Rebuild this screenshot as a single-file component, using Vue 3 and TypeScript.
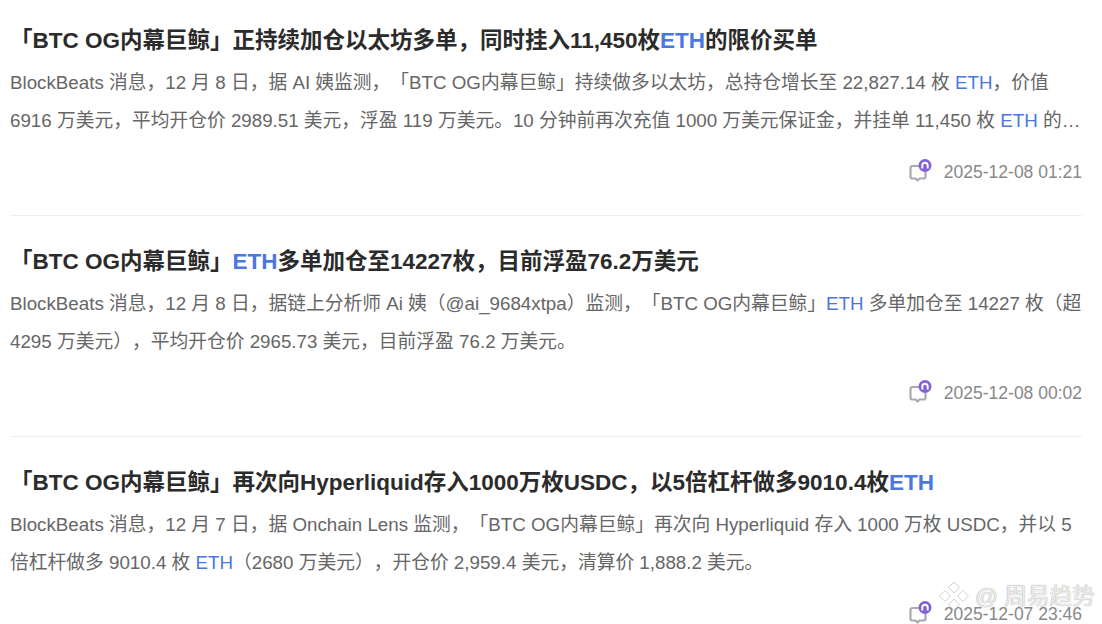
<script setup lang="ts">
interface Seg { t: string; e?: boolean }
interface Item { title: Seg[]; body: Seg[]; date: string }
const e = (t: string): Seg => ({ t, e: true })
const s = (t: string): Seg => ({ t })
const items: Item[] = [
  {
    title: [s('「BTC OG内幕巨鲸」正持续加仓以太坊多单，同时挂入11,450枚'), e('ETH'), s('的限价买单')],
    body: [s('BlockBeats 消息，12 月 8 日，据 AI 姨监测，「BTC OG内幕巨鲸」持续做多以太坊，总持仓增长至 22,827.14 枚 '), e('ETH'), s('，价值 6916 万美元，平均开仓价 2989.51 美元，浮盈 119 万美元。10 分钟前再次充值 1000 万美元保证金，并挂单 11,450 枚 '), e('ETH'), s(' 的限价买单，挂单价格区间为 2,900 至 2,950 美元。')],
    date: '2025-12-08 01:21',
  },
  {
    title: [s('「BTC OG内幕巨鲸」'), e('ETH'), s('多单加仓至14227枚，目前浮盈76.2万美元')],
    body: [s('BlockBeats 消息，12 月 8 日，据链上分析师 Ai 姨（@ai_9684xtpa）监测，「BTC OG内幕巨鲸」'), e('ETH'), s(' 多单加仓至 14227 枚（超 4295 万美元），平均开仓价 2965.73 美元，目前浮盈 76.2 万美元。')],
    date: '2025-12-08 00:02',
  },
  {
    title: [s('「BTC OG内幕巨鲸」再次向Hyperliquid存入1000万枚USDC，以5倍杠杆做多9010.4枚'), e('ETH')],
    body: [s('BlockBeats 消息，12 月 7 日，据 Onchain Lens 监测，「BTC OG内幕巨鲸」再次向 Hyperliquid 存入 1000 万枚 USDC，并以 5 倍杠杆做多 9010.4 枚 '), e('ETH'), s('（2680 万美元），开仓价 2,959.4 美元，清算价 1,888.2 美元。')],
    date: '2025-12-07 23:46',
  },
]
</script>

<template>
  <main class="page">
    <article v-for="item in items" :key="item.date" class="item">
      <h2 class="title"><template v-for="(p, i) in item.title" :key="i"><span :class="{ eth: p.e }">{{ p.t }}</span></template></h2>
      <p class="body"><template v-for="(p, i) in item.body" :key="i"><span :class="{ eth: p.e }">{{ p.t }}</span></template></p>
      <div class="meta">
        <svg class="icon" width="26" height="26" viewBox="0 0 26 26" aria-hidden="true">
          <path d="M12 7H4.500A2 2 0 0 0 2.500 9v8.500a2 2 0 0 0 2 2h3l2 2 2-2h4a2 2 0 0 0 2-2v-4" fill="none" stroke="#a9a9b3" stroke-width="2.200" stroke-linecap="round" stroke-linejoin="round"/>
          <circle cx="17" cy="6.500" r="6.500" fill="#8261d6"/>
          <path d="M14.300 9.500v-3a2.700 2.700 0 0 1 5.400 0v3" fill="none" stroke="#fff" stroke-width="1.900"/>
        </svg>
        <time class="date">{{ item.date }}</time>
      </div>
    </article>
    <div class="mark">
      <svg class="logo" width="32" height="32" viewBox="0 0 32 32" aria-hidden="true">
        <g fill="rgba(255,255,255,0.85)" stroke="rgba(190,190,190,0.7)" stroke-width="1">
          <path d="M16 2l5.500 5.500-5.500 5.500-5.500-5.500z"/>
          <path d="M7 10.500l5.500 5.500-5.500 5.500-5.500-5.500z"/>
          <path d="M25 10.500l5.500 5.500-5.500 5.500-5.500-5.500z"/>
          <path d="M16 19l5.500 5.500-5.500 5.500-5.500-5.500z"/>
        </g>
      </svg>
      <span class="mark-text">@ 周易趋势</span>
    </div>
  </main>
</template>

<style>
html, body { margin: 0; background: #fff; overflow: hidden; }
</style>

<style scoped>
.page {
  position: relative;
  width: 1102px;
  height: 624px;
  overflow: hidden;
  box-sizing: border-box;
  padding: 0 20px 0 10px;
  font-family: "Liberation Sans", "Noto Sans CJK SC", sans-serif;
  text-spacing-trim: space-all;
}
.item {
  height: 216px;
  margin-bottom: 5px;
  box-sizing: border-box;
  padding-top: 24px;
  border-bottom: 1px solid #efefef;
}
.title {
  margin: 0;
  font-size: 22.500px;
  line-height: 33px;
  font-weight: 700;
  color: #2b2b2b;
  white-space: nowrap;
}
.eth { color: #4a78e0; }
.body {
  margin: 7px 0 0;
  font-size: 18.750px;
  line-height: 38px;
  color: #666;
  display: -webkit-box;
  -webkit-box-orient: vertical;
  -webkit-line-clamp: 2;
  line-clamp: 2;
  overflow: hidden;
  height: 76px;
}
.meta {
  display: flex;
  justify-content: flex-end;
  align-items: center;
  gap: 10px;
  margin-top: 19px;
  height: 26px;
}
.icon { display: block; }
.date {
  font-size: 17.500px;
  color: #888;
  line-height: 26px;
  white-space: nowrap;
}
.mark {
  position: absolute;
  right: 7px;
  bottom: 12px;
  display: flex;
  align-items: center;
  gap: 5px;
  color: rgba(255, 255, 255, 0.85);
  text-shadow: 0 0 1px rgba(110, 110, 110, 0.9);
}
.logo { display: block; }
.mark-text { font-size: 22.700px; line-height: 28px; white-space: nowrap; }
</style>
